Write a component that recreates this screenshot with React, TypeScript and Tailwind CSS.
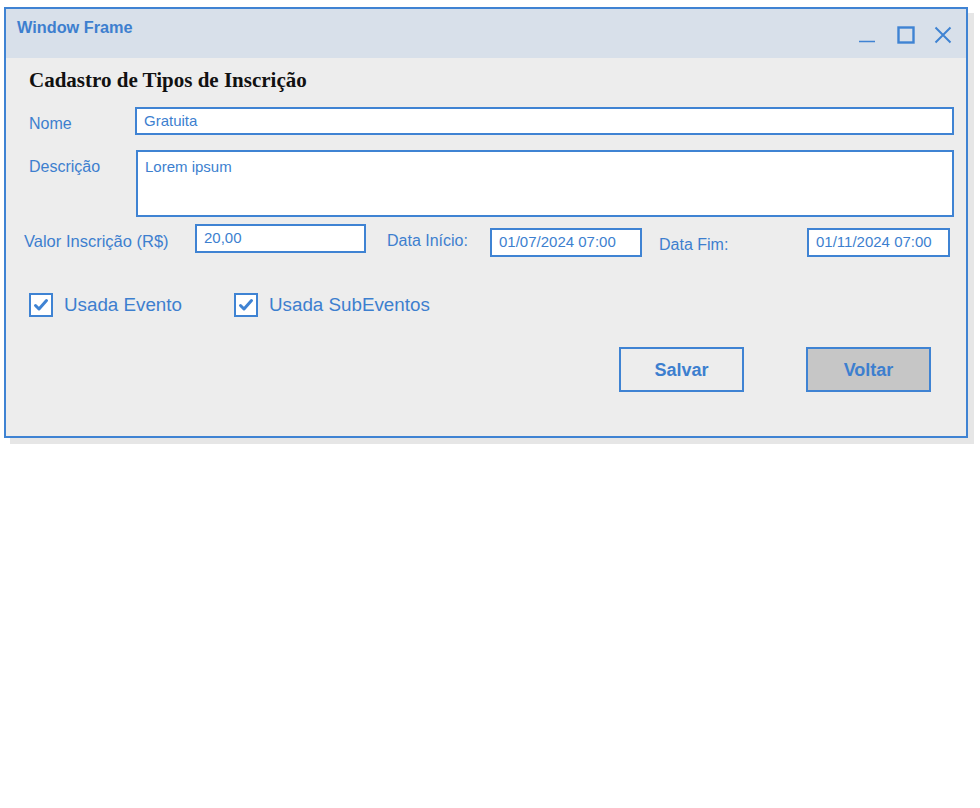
import React from "react";

const BLUE = "border-[#3f83d3]";

function Check() {
  return (
    <div className="w-[24px] h-[24px] border-2 border-[#3f83d3] bg-white flex items-center justify-center">
      <svg width="16" height="16" viewBox="0 0 16 16">
        <path d="M2.5 8.5 L6 12 L13.5 3.5" fill="none" stroke="#3f83d3" strokeWidth="3" strokeLinecap="round" strokeLinejoin="round" />
      </svg>
    </div>
  );
}

export default function App() {
  return (
    <div className="w-[980px] h-[808px] bg-white" style={{ fontFamily: '"Liberation Sans", Arial, sans-serif' }}>
      <div className="pl-[4px] pt-[7px]">
        <div className={`w-[964px] h-[431px] border-2 ${BLUE} flex flex-col shadow-[6px_6px_0_#e6e6e6] text-[#3d7fcf]`}>
          {/* Title bar */}
          <div className="h-[49px] bg-[#d8e0ea] flex items-start">
            <div className="pl-[11px] pt-[8px] text-[16.3px] leading-[20px] font-bold">Window Frame</div>
            <div className="ml-auto mr-[14px] mt-[17px] flex items-start">
              <svg width="18" height="18" viewBox="0 0 18 18" className="mr-[21px]">
                <line x1="1" y1="15.5" x2="17" y2="15.5" stroke="#3f83d3" strokeWidth="1.5" />
              </svg>
              <svg width="18" height="18" viewBox="0 0 18 18" className="mr-[19px]">
                <rect x="1.5" y="1.5" width="15" height="15" fill="none" stroke="#3f83d3" strokeWidth="2.4" />
              </svg>
              <svg width="18" height="18" viewBox="0 0 18 18">
                <path d="M1.5 1.5 L16.5 16.5 M16.5 1.5 L1.5 16.5" stroke="#3f83d3" strokeWidth="2" />
              </svg>
            </div>
          </div>
          {/* Body */}
          <div className="flex-1 bg-[#ededed] flex flex-col">
            <div
              className="pl-[23px] mt-[10px] text-[21px] leading-[24px] font-bold text-[#111]"
              style={{ fontFamily: '"Liberation Serif", "Times New Roman", serif' }}
            >
              Cadastro de Tipos de Inscrição
            </div>

            {/* Nome */}
            <div className="flex items-start mt-[15px]">
              <div className="w-[129px] pl-[23px] pt-[7px] text-[16px] leading-[20px]">Nome</div>
              <div className="w-[819px] h-[28px] border-2 border-[#3f83d3] bg-white pl-[7px] text-[15px] leading-[23px]">Gratuita</div>
            </div>

            {/* Descrição */}
            <div className="flex items-start mt-[15px]">
              <div className="w-[130px] pl-[23px] pt-[7px] text-[16px] leading-[20px]">Descrição</div>
              <div className="w-[818px] h-[67px] border-2 border-[#3f83d3] bg-white pl-[7px] pt-[6px] text-[15px] leading-[18px]">Lorem ipsum</div>
            </div>

            {/* Valor / Datas */}
            <div className="flex items-start mt-[7px]">
              <div className="ml-[18px] w-[171px] pt-[7px] text-[16.5px] leading-[20px] whitespace-nowrap">Valor Inscrição (R$)</div>
              <div className="w-[171px] h-[29px] border-2 border-[#3f83d3] bg-white pl-[7px] text-[15px] leading-[24px]">20,00</div>
              <div className="ml-[21px] w-[103px] pt-[7px] text-[16px] leading-[20px]">Data Início:</div>
              <div className="mt-[4px] w-[152px] h-[29px] border-2 border-[#3f83d3] bg-white pl-[7px] text-[15px] leading-[24px]">01/07/2024 07:00</div>
              <div className="ml-[17px] w-[148px] pt-[11px] text-[16px] leading-[20px]">Data Fim:</div>
              <div className="mt-[4px] w-[143px] h-[29px] border-2 border-[#3f83d3] bg-white pl-[7px] text-[15px] leading-[24px]">01/11/2024 07:00</div>
            </div>

            {/* Checkboxes */}
            <div className="flex items-center mt-[36px] pl-[23px]">
              <Check />
              <div className="ml-[11px] w-[170px] text-[18.8px] leading-[24px]">Usada Evento</div>
              <Check />
              <div className="ml-[11px] text-[18.8px] leading-[24px]">Usada SubEventos</div>
            </div>

            {/* Buttons */}
            <div className="flex mt-[30px] pl-[613px]">
              <div className="w-[125px] h-[45px] border-2 border-[#3f83d3] flex items-center justify-center text-[18px] font-bold pt-[2px]">Salvar</div>
              <div className="ml-[62px] w-[125px] h-[45px] border-2 border-[#3f83d3] bg-[#c6c6c6] flex items-center justify-center text-[18px] font-bold pt-[2px]">Voltar</div>
            </div>
          </div>
        </div>
      </div>
    </div>
  );
}
